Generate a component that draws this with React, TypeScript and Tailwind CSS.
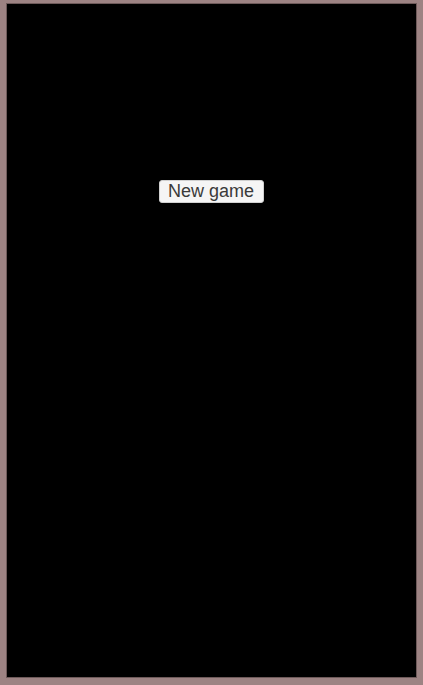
export default function App() {
  return (
    <div
      className="w-[423px] h-[685px] bg-[#9d8383] pt-[3px] pb-[7px] px-[6px] flex"
      style={{ fontFamily: '"Liberation Sans", Arial, sans-serif' }}
    >
      <div className="flex-1 border border-[#6e5a5a] bg-black flex flex-col items-center pt-[176px]">
        <button className="h-[23px] pl-[8px] pr-[9px] rounded-[3px] bg-[#f5f5f5] border border-[#d0d0d0] text-[18px] leading-[21px] text-[#3a3a3a]">
          New game
        </button>
      </div>
    </div>
  );
}
